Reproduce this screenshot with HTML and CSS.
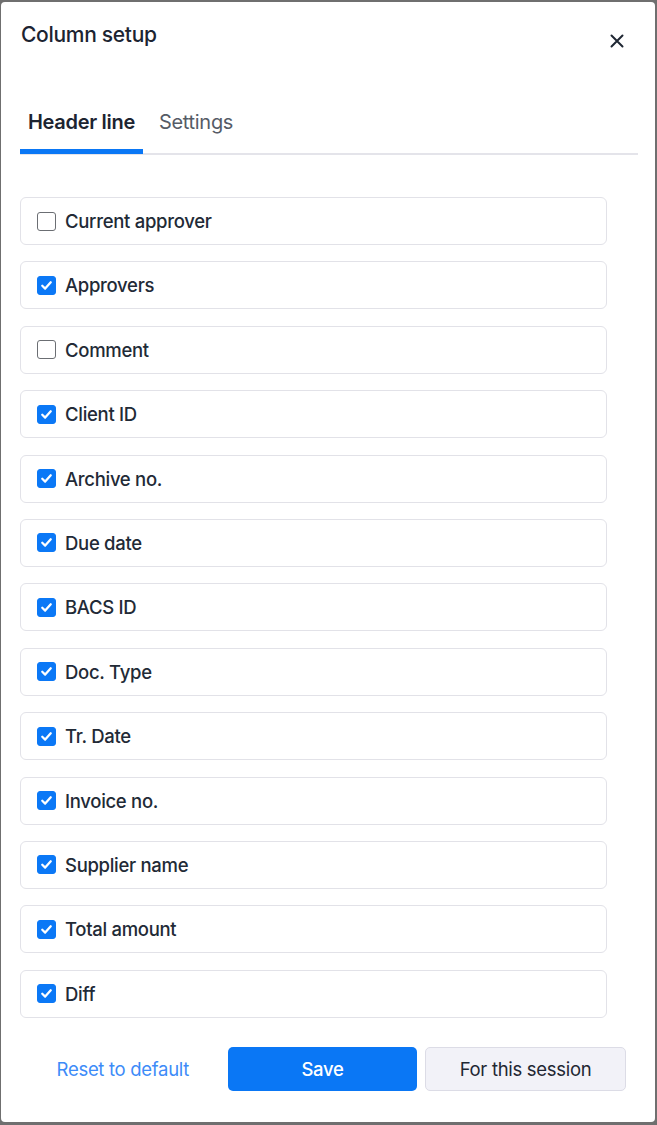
FILE: index.html
```html
<!DOCTYPE html>
<html lang="en">
<head>
<meta charset="utf-8">
<title>Column setup</title>
<link rel="stylesheet" href="styles.css">
</head>
<body>
<div class="dialog">
  <div class="header">
    <h1 class="title">Column setup</h1>
    <button class="close" aria-label="Close">
      <svg width="14" height="14" viewBox="0 0 14 14"><path d="M1.5 1.5 L12.5 12.5 M12.5 1.5 L1.5 12.5" stroke="#1f2733" stroke-width="2" stroke-linecap="round"/></svg>
    </button>
  </div>
  <div class="tabs">
    <div class="tab active">Header line</div>
    <div class="tab">Settings</div>
  </div>
  <div class="list">
    <label class="row"><span class="cb"></span><span class="lbl">Current approver</span></label>
    <label class="row"><span class="cb on"><svg viewBox="0 0 18 18"><path d="M4.5 9.3 L7.6 12.3 L13.5 5.6" fill="none" stroke="#fff" stroke-width="2.4" stroke-linecap="round" stroke-linejoin="round"/></svg></span><span class="lbl">Approvers</span></label>
    <label class="row"><span class="cb"></span><span class="lbl">Comment</span></label>
    <label class="row"><span class="cb on"><svg viewBox="0 0 18 18"><path d="M4.5 9.3 L7.6 12.3 L13.5 5.6" fill="none" stroke="#fff" stroke-width="2.4" stroke-linecap="round" stroke-linejoin="round"/></svg></span><span class="lbl">Client ID</span></label>
    <label class="row"><span class="cb on"><svg viewBox="0 0 18 18"><path d="M4.5 9.3 L7.6 12.3 L13.5 5.6" fill="none" stroke="#fff" stroke-width="2.4" stroke-linecap="round" stroke-linejoin="round"/></svg></span><span class="lbl">Archive no.</span></label>
    <label class="row"><span class="cb on"><svg viewBox="0 0 18 18"><path d="M4.5 9.3 L7.6 12.3 L13.5 5.6" fill="none" stroke="#fff" stroke-width="2.4" stroke-linecap="round" stroke-linejoin="round"/></svg></span><span class="lbl">Due date</span></label>
    <label class="row"><span class="cb on"><svg viewBox="0 0 18 18"><path d="M4.5 9.3 L7.6 12.3 L13.5 5.6" fill="none" stroke="#fff" stroke-width="2.4" stroke-linecap="round" stroke-linejoin="round"/></svg></span><span class="lbl">BACS ID</span></label>
    <label class="row"><span class="cb on"><svg viewBox="0 0 18 18"><path d="M4.5 9.3 L7.6 12.3 L13.5 5.6" fill="none" stroke="#fff" stroke-width="2.4" stroke-linecap="round" stroke-linejoin="round"/></svg></span><span class="lbl">Doc. Type</span></label>
    <label class="row"><span class="cb on"><svg viewBox="0 0 18 18"><path d="M4.5 9.3 L7.6 12.3 L13.5 5.6" fill="none" stroke="#fff" stroke-width="2.4" stroke-linecap="round" stroke-linejoin="round"/></svg></span><span class="lbl">Tr. Date</span></label>
    <label class="row"><span class="cb on"><svg viewBox="0 0 18 18"><path d="M4.5 9.3 L7.6 12.3 L13.5 5.6" fill="none" stroke="#fff" stroke-width="2.4" stroke-linecap="round" stroke-linejoin="round"/></svg></span><span class="lbl">Invoice no.</span></label>
    <label class="row"><span class="cb on"><svg viewBox="0 0 18 18"><path d="M4.5 9.3 L7.6 12.3 L13.5 5.6" fill="none" stroke="#fff" stroke-width="2.4" stroke-linecap="round" stroke-linejoin="round"/></svg></span><span class="lbl">Supplier name</span></label>
    <label class="row"><span class="cb on"><svg viewBox="0 0 18 18"><path d="M4.5 9.3 L7.6 12.3 L13.5 5.6" fill="none" stroke="#fff" stroke-width="2.4" stroke-linecap="round" stroke-linejoin="round"/></svg></span><span class="lbl">Total amount</span></label>
    <label class="row"><span class="cb on"><svg viewBox="0 0 18 18"><path d="M4.5 9.3 L7.6 12.3 L13.5 5.6" fill="none" stroke="#fff" stroke-width="2.4" stroke-linecap="round" stroke-linejoin="round"/></svg></span><span class="lbl">Diff</span></label>
  </div>
  <div class="footer">
    <a class="reset" href="#">Reset to default</a>
    <button class="btn primary">Save</button>
    <button class="btn secondary">For this session</button>
  </div>
</div>
</body>
</html>
```
FILE: styles.css
```css
* { box-sizing: border-box; }
html, body { margin: 0; padding: 0; }
body {
  background: #6f6f6f;
  font-family: Inter, "Open Sans", "Liberation Sans", sans-serif;
  color: #1f2733;
  width: 657px;
  height: 1125px;
  overflow: hidden;
}
.dialog {
  margin: 2px 2px 0 1px;
  height: 1120px;
  background: #fff;
  border-radius: 4px;
  padding: 0 17px 0 19px;
  display: flex;
  flex-direction: column;
}
.header {
  display: flex;
  justify-content: space-between;
  align-items: flex-start;
  padding-top: 21px;
  height: 98px;
}
.title {
  margin: 0;
  font-size: 21px;
  font-weight: 500;
  line-height: 24px;
  color: #1c2431;
  padding-left: 1px;
  letter-spacing: -0.3px;
}
.close {
  border: 0;
  background: none;
  padding: 0;
  margin: 11px 14px 0 0;
  width: 14px;
  height: 14px;
  display: flex;
}
.tabs {
  display: flex;
  gap: 8px;
  border-bottom: 2px solid #e4e4ea;
  height: 55px;
}
.tab {
  padding: 10px 8px 0;
  font-size: 20px;
  line-height: 24px;
  color: #555b66;
  position: relative;
  letter-spacing: -0.3px;
}
.tab.active {
  color: #1c2431;
  font-weight: 600;
}
.tab.active::after {
  content: "";
  position: absolute;
  left: 0;
  right: 0;
  bottom: -1px;
  height: 5px;
  background: #0a77f5;
}
.list {
  padding-top: 42px;
  padding-right: 31px;
  display: flex;
  flex-direction: column;
  gap: 16.4px;
}
.row {
  height: 48px;
  border: 1.5px solid #e2e2e8;
  border-radius: 6px;
  display: flex;
  align-items: center;
  padding-left: 16px;
  gap: 9px;
}
.cb {
  width: 19px;
  height: 19px;
  border: 1.6px solid #6b6e73;
  border-radius: 3px;
  display: flex;
  flex: none;
}
.cb.on {
  background: #0b78f6;
  border-color: #0b78f6;
}
.cb svg { width: 100%; height: 100%; }
.lbl {
  font-size: 18.5px;
  font-weight: 500;
  color: #222a36;
  letter-spacing: -0.3px;
}
.footer {
  display: flex;
  justify-content: flex-end;
  align-items: center;
  gap: 8px;
  margin-top: 29px;
  padding-right: 12px;
}
.reset {
  font-size: 18.5px;
  color: #3d8bf8;
  text-decoration: none;
  margin-right: 31px;
  letter-spacing: -0.3px;
}
.btn {
  height: 44px;
  border-radius: 5px;
  font-family: inherit;
  font-size: 18.5px;
  letter-spacing: -0.3px;
}
.primary {
  width: 189px;
  background: #0a77f5;
  color: #fff;
  border: 0;
  font-weight: 500;
}
.secondary {
  width: 201px;
  background: #f2f2f8;
  border: 1.5px solid #dcdce6;
  color: #1f2733;
}
```
